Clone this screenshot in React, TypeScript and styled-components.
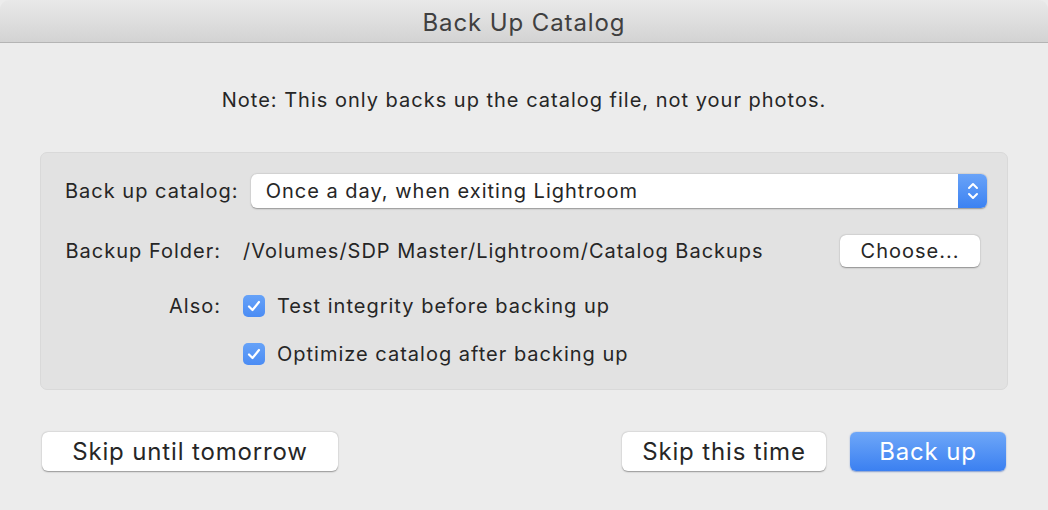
import React from "react";
import styled, { createGlobalStyle } from "styled-components";

const GlobalStyle = createGlobalStyle`
  html, body {
    margin: 0;
    padding: 0;
    background: #ececec;
  }
  body {
    font-family: Inter, "Liberation Sans", sans-serif;
    color: #262626;
    letter-spacing: 1px;
  }
`;

const Window = styled.div`
  width: 1048px;
  height: 510px;
  display: flex;
  flex-direction: column;
  background: #ececec;
  border-radius: 9px 9px 0 0;
  overflow: hidden;
`;

const TitleBar = styled.div`
  height: 43px;
  flex: none;
  display: flex;
  align-items: center;
  justify-content: center;
  padding-top: 2px;
  box-sizing: border-box;
  background: linear-gradient(#e9e9e9, #d3d3d3);
  border-bottom: 1px solid #b4b4b4;
  font-size: 24px;
  color: #404040;
  letter-spacing: 0.9px;
`;

const Note = styled.div`
  margin-top: 45px;
  text-align: center;
  font-size: 20px;
  line-height: 24px;
`;

const Panel = styled.div`
  margin: 40px 40px 0 40px;
  padding: 21px 20px 23px 24px;
  background: #e2e2e2;
  border: 1px solid #d9d9d9;
  border-radius: 7px;
  display: flex;
  flex-direction: column;
`;

const Row = styled.div<{ $top?: number; $h: number }>`
  display: flex;
  align-items: center;
  height: ${(p) => p.$h}px;
  margin-top: ${(p) => p.$top ?? 0}px;
  font-size: 20px;
`;

const Label = styled.div<{ $w?: number }>`
  width: ${(p) => (p.$w ? `${p.$w}px` : "auto")};
  text-align: right;
  flex: none;
`;

const Popup = styled.div`
  margin-left: 12px;
  flex: 1;
  height: 34px;
  display: flex;
  align-items: stretch;
  background: #fff;
  border-radius: 6px;
  box-shadow: 0 0.5px 1.5px rgba(0, 0, 0, 0.35);
  overflow: hidden;
`;

const PopupText = styled.div`
  flex: 1;
  display: flex;
  align-items: center;
  padding-left: 15px;
`;

const Stepper = styled.div`
  width: 29px;
  display: flex;
  align-items: center;
  justify-content: center;
  background: linear-gradient(#69a3f8, #3c82f2);
`;

const Path = styled.div`
  margin-left: 22px;
  flex: 1;
`;

const Button = styled.button<{ $primary?: boolean; $w: number; $h: number }>`
  width: ${(p) => p.$w}px;
  height: ${(p) => p.$h}px;
  flex: none;
  border: none;
  border-radius: 6px;
  font-family: inherit;
  letter-spacing: ${(p) => (p.$h > 35 ? 0.85 : 1)}px;
  font-size: ${(p) => (p.$h > 35 ? 24 : 20)}px;
  color: ${(p) => (p.$primary ? "#fff" : "#262626")};
  background: ${(p) =>
    p.$primary ? "linear-gradient(#6ea7f8, #3b80f1)" : "#fff"};
  box-shadow: ${(p) =>
    p.$primary
      ? "0 0.5px 1.5px rgba(30, 80, 180, 0.5)"
      : "0 0.5px 1.5px rgba(0, 0, 0, 0.38)"};
  padding: 0;
`;

const Check = styled.div`
  margin-left: 22px;
  width: 22px;
  height: 22px;
  border-radius: 5px;
  background: linear-gradient(#66a2f8, #4b8cf4);
  display: flex;
  align-items: center;
  justify-content: center;
  flex: none;
`;

const CheckText = styled.div`
  margin-left: 12px;
`;

const Footer = styled.div`
  margin-top: 42px;
  padding: 0 42px;
  display: flex;
  align-items: center;
  gap: 24px;
`;

const Spacer = styled.div`
  flex: 1;
`;

const Tick = () => (
  <svg width="14" height="12" viewBox="0 0 14 12">
    <path
      d="M2 6.5 L5.5 10 L12 2"
      fill="none"
      stroke="#fff"
      strokeWidth="2.2"
      strokeLinecap="round"
      strokeLinejoin="round"
    />
  </svg>
);

const Chevrons = () => (
  <svg width="14" height="22" viewBox="0 0 14 22">
    <path
      d="M3 8 L7 4 L11 8 M3 14 L7 18 L11 14"
      fill="none"
      stroke="#fff"
      strokeWidth="2"
      strokeLinecap="round"
      strokeLinejoin="round"
    />
  </svg>
);

export default function App() {
  return (
    <>
      <GlobalStyle />
      <Window>
        <TitleBar>Back Up Catalog</TitleBar>
        <Note>Note: This only backs up the catalog file, not your photos.</Note>
        <Panel>
          <Row $h={34}>
            <Label>Back up catalog:</Label>
            <Popup>
              <PopupText>Once a day, when exiting Lightroom</PopupText>
              <Stepper>
                <Chevrons />
              </Stepper>
            </Popup>
          </Row>
          <Row $h={32} $top={27}>
            <Label $w={156}>Backup Folder:</Label>
            <Path>/Volumes/SDP Master/Lightroom/Catalog Backups</Path>
            <Button $w={140} $h={32} style={{ marginRight: 7 }}>
              Choose...
            </Button>
          </Row>
          <Row $h={24} $top={27}>
            <Label $w={156}>Also:</Label>
            <Check>
              <Tick />
            </Check>
            <CheckText>Test integrity before backing up</CheckText>
          </Row>
          <Row $h={24} $top={24}>
            <Label $w={156} />
            <Check>
              <Tick />
            </Check>
            <CheckText>Optimize catalog after backing up</CheckText>
          </Row>
        </Panel>
        <Footer>
          <Button $w={296} $h={39}>
            Skip until tomorrow
          </Button>
          <Spacer />
          <Button $w={204} $h={39}>
            Skip this time
          </Button>
          <Button $primary $w={156} $h={39}>
            Back up
          </Button>
        </Footer>
      </Window>
    </>
  );
}
